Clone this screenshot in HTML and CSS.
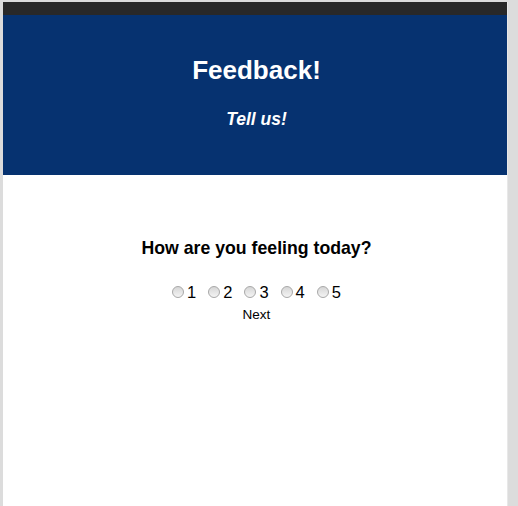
FILE: index.html
```html
<!DOCTYPE html>
<html lang="en">
<head>
<meta charset="utf-8">
<title>Feedback</title>
<link rel="stylesheet" href="styles.css">
</head>
<body>
<div class="frame">
  <div class="topbar"></div>
  <header class="hero">
    <h1 class="title">Feedback!</h1>
    <p class="subtitle">Tell us!</p>
  </header>
  <main class="content">
    <h2 class="question">How are you feeling today?</h2>
    <form class="rating">
      <label class="opt"><input type="radio" name="feel" value="1"><span>1</span></label>
      <label class="opt"><input type="radio" name="feel" value="2"><span>2</span></label>
      <label class="opt"><input type="radio" name="feel" value="3"><span>3</span></label>
      <label class="opt"><input type="radio" name="feel" value="4"><span>4</span></label>
      <label class="opt"><input type="radio" name="feel" value="5"><span>5</span></label>
    </form>
    <div class="next">Next</div>
  </main>
</div>
</body>
</html>
```

FILE: styles.css
```css
html, body {
  margin: 0;
  height: 100%;
}
body {
  background: #dcdcdc;
  font-family: "Liberation Sans", Arial, Helvetica, sans-serif;
  padding: 2px 10px 0 3px;
  box-sizing: border-box;
}
.frame {
  height: 100%;
  display: flex;
  flex-direction: column;
  background: #ffffff;
  border-right: 1px solid #e8e8e8;
}
.topbar {
  height: 13px;
  background: #282828;
  flex: none;
}
.hero {
  flex: none;
  height: 160px;
  box-sizing: border-box;
  background: #063270;
  color: #ffffff;
  text-align: center;
  padding: 40px 0 0 3px;
}
.title {
  margin: 0;
  font-size: 26px;
  line-height: 30px;
  font-weight: bold;
}
.subtitle {
  margin: 24px 0 0;
  font-size: 17.5px;
  line-height: 20px;
  font-weight: bold;
  font-style: italic;
}
.content {
  flex: 1;
  display: flex;
  flex-direction: column;
  align-items: center;
  padding: 62px 0 0 3px;
  color: #000000;
}
.question {
  margin: 0;
  font-size: 17.7px;
  line-height: 22px;
  font-weight: bold;
}
.rating {
  margin-top: 23px;
  display: flex;
  gap: 12px;
  height: 20px;
  align-items: center;
}
.opt {
  display: flex;
  align-items: center;
  gap: 3px;
  font-size: 16.5px;
  line-height: 20px;
  color: #000000;
}
.opt input {
  appearance: none;
  -webkit-appearance: none;
  margin: 0;
  width: 12px;
  height: 12px;
  border-radius: 50%;
  border: 1px solid #a8a8a8;
  box-sizing: border-box;
  background: linear-gradient(#d6d6d6, #f4f4f4);
}
.next {
  margin-top: 5px;
  font-size: 13.5px;
  line-height: 16px;
  color: #000000;
}
```
